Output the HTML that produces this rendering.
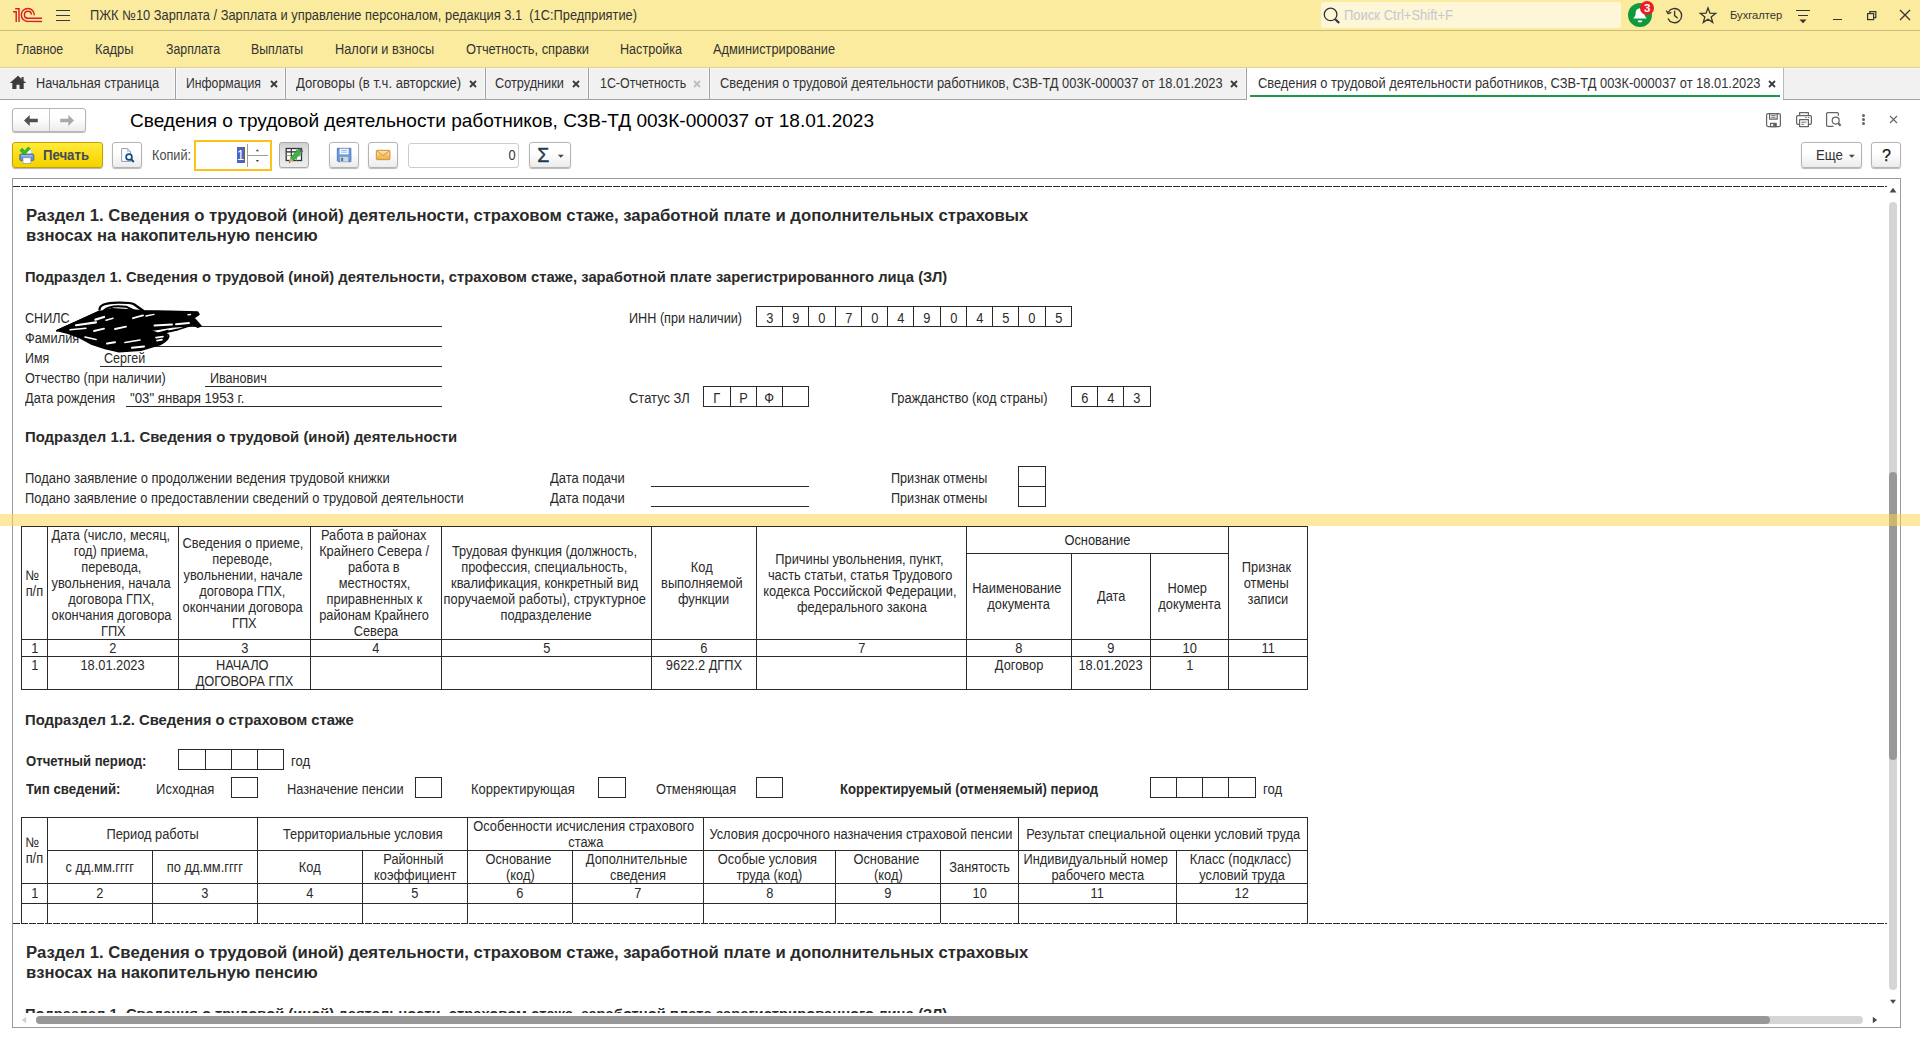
<!DOCTYPE html>
<html lang="ru"><head><meta charset="utf-8"><title>Сведения о трудовой деятельности работников, СЗВ-ТД</title>
<style>
html,body{margin:0;padding:0}
body{width:1920px;height:1040px;position:relative;overflow:hidden;background:#fff;font-family:'Liberation Sans', sans-serif;}
body div, body span, body svg{position:absolute;box-sizing:border-box}
span{white-space:pre;display:block}
.btn{border:1px solid #b4b4b4;border-radius:3px;background:linear-gradient(#ffffff 40%,#ececec);box-shadow:0 1px 1px rgba(0,0,0,.28)}
.clip{overflow:hidden}
.clip div,.clip span,.clip svg{position:absolute}
</style></head>
<body>
<div style="left:0px;top:0px;width:1920px;height:30px;background:#fbeb9e"></div>
<div style="left:0px;top:30px;width:1920px;height:1px;background:#cdbd76"></div>
<div style="left:0px;top:31px;width:1920px;height:36px;background:#fbeb9e"></div>
<div style="left:0px;top:67px;width:1920px;height:1px;background:#e0d292"></div>
<div style="left:0px;top:68px;width:1920px;height:31px;background:#f1f1f1"></div>
<div style="left:0px;top:68px;width:1920px;height:1px;background:#f8f8f8"></div>
<div style="left:0px;top:99px;width:1920px;height:1px;background:#a2a2a2"></div>
<svg style="left:10px;top:5px" width="36" height="22" viewBox="10 5 36 22" fill="none" stroke="#d9202a" stroke-width="1.45" stroke-linecap="butt" stroke-linejoin="miter">
<path d="M13 11.7H16.2V22"/><path d="M15.2 8.7H19V22"/>
<path d="M34.3 15.2A6.5 6.5 0 1 0 27.9 21.4H42"/>
<path d="M31.4 14.6A3.5 3.5 0 1 0 27.9 18.3H42"/>
</svg>
<div style="left:56px;top:10px;width:14px;height:1.4px;background:#343a45"></div>
<div style="left:56px;top:15px;width:14px;height:1.4px;background:#343a45"></div>
<div style="left:56px;top:20px;width:14px;height:1.4px;background:#343a45"></div>
<span style="left:90.00px;top:7px;font-size:13.8px;line-height:17px;color:#333;transform:scaleX(0.9309);transform-origin:left top;">ПЖК №10 Зарплата / Зарплата и управление персоналом, редакция 3.1  (1С:Предприятие)</span>
<div style="left:1321px;top:2px;width:300px;height:26px;background:#fdf6d7;border-radius:3px"></div>
<svg style="left:1322px;top:5px" width="20" height="20" viewBox="0 0 20 20" fill="none" stroke="#333" stroke-width="1.3"><circle cx="8.6" cy="9.4" r="6.3"/><path d="M13.2 14.2L17.2 18" stroke-width="2.2"/></svg>
<span style="left:1343.50px;top:7px;font-size:13.8px;line-height:17px;color:#c6c6cf;transform:scaleX(0.9423);transform-origin:left top;">Поиск Ctrl+Shift+F</span>
<svg style="left:1626px;top:0px" width="32" height="30" viewBox="1626 0 32 30">
<circle cx="1640" cy="15" r="12" fill="#0f9a3f"/>
<path d="M1640 8.2c-2.9 0-4.3 2.2-4.3 4.6 0 3-1.3 4.6-2.6 5.6h13.8c-1.3-1-2.6-2.600-2.6-5.600 0-2.400-1.400-4.600-4.300-4.600z" fill="#fff"/>
<path d="M1637.600 20.500h4.800a2.400 1.900 0 0 1-4.800 0z" fill="#fff"/>
<circle cx="1647" cy="8" r="7" fill="#ee1c25"/>
</svg>
<span style="left:1643.90px;top:1px;font-size:11.5px;line-height:14px;color:#fff;font-weight:700;">3</span>
<svg style="left:1664px;top:5px" width="22" height="22" viewBox="1664 5 22 22" fill="none" stroke="#333" stroke-width="1.3">
<path d="M1668.300 12.200A7.100 7.100 0 1 1 1668 18.400"/><path d="M1666.300 10.600L1668.200 13.700 1671.300 12.300" fill="none"/>
<path d="M1674.600 10.800V15.600L1677.700 18.200"/></svg>
<svg style="left:1698px;top:5px" width="22" height="22" viewBox="1698 5 22 22" fill="none" stroke="#333" stroke-width="1.3" stroke-linejoin="miter">
<path d="M1708.00 7.90L1709.94 13.23 1715.61 13.43 1711.14 16.92 1712.70 22.37 1708.00 19.20 1703.30 22.37 1704.86 16.92 1700.39 13.43 1706.06 13.23Z"/></svg>
<span style="left:1729.70px;top:8px;font-size:11.5px;line-height:14px;color:#333;transform:scaleX(0.9725);transform-origin:left top;">Бухгалтер</span>
<div style="left:1796px;top:10px;width:14px;height:1.3px;background:#333"></div>
<div style="left:1798px;top:15px;width:10px;height:1.3px;background:#333"></div>
<svg style="left:1799px;top:19px" width="8" height="5" viewBox="0 0 8 5"><path d="M0.5 0.500h7L4 4.300z" fill="#333"/></svg>
<div style="left:1833px;top:19px;width:9px;height:1.3px;background:#333"></div>
<svg style="left:1865px;top:9px" width="14" height="13" viewBox="1865 9 14 13" fill="none" stroke="#333" stroke-width="1.2">
<rect x="1867.600" y="13.600" width="6" height="6"/><path d="M1869.800 13.600V11.600H1875.800V17.600H1873.600"/></svg>
<svg style="left:1898px;top:8px" width="14" height="14" viewBox="1898 8 14 14" fill="none" stroke="#333" stroke-width="1.3"><path d="M1900 10L1910 20M1910 10L1900 20"/></svg>
<span style="left:16.30px;top:41px;font-size:13.8px;line-height:17px;color:#333;transform:scaleX(0.8953);transform-origin:left top;">Главное</span>
<span style="left:95.00px;top:41px;font-size:13.8px;line-height:17px;color:#333;transform:scaleX(0.9309);transform-origin:left top;">Кадры</span>
<span style="left:165.50px;top:41px;font-size:13.8px;line-height:17px;color:#333;transform:scaleX(0.8937);transform-origin:left top;">Зарплата</span>
<span style="left:251.30px;top:41px;font-size:13.8px;line-height:17px;color:#333;transform:scaleX(0.8927);transform-origin:left top;">Выплаты</span>
<span style="left:335.30px;top:41px;font-size:13.8px;line-height:17px;color:#333;transform:scaleX(0.9249);transform-origin:left top;">Налоги и взносы</span>
<span style="left:466.00px;top:41px;font-size:13.8px;line-height:17px;color:#333;transform:scaleX(0.9323);transform-origin:left top;">Отчетность, справки</span>
<span style="left:620.00px;top:41px;font-size:13.8px;line-height:17px;color:#333;transform:scaleX(0.9128);transform-origin:left top;">Настройка</span>
<span style="left:713.00px;top:41px;font-size:13.8px;line-height:17px;color:#333;transform:scaleX(0.9273);transform-origin:left top;">Администрирование</span>
<div style="left:174px;top:69px;width:3px;height:30px;background:#f8f8f8"></div>
<div style="left:175px;top:68px;width:1px;height:31px;background:#a0a0a0"></div>
<div style="left:284px;top:69px;width:3px;height:30px;background:#f8f8f8"></div>
<div style="left:285px;top:68px;width:1px;height:31px;background:#a0a0a0"></div>
<div style="left:484px;top:69px;width:3px;height:30px;background:#f8f8f8"></div>
<div style="left:485px;top:68px;width:1px;height:31px;background:#a0a0a0"></div>
<div style="left:587px;top:69px;width:3px;height:30px;background:#f8f8f8"></div>
<div style="left:588px;top:68px;width:1px;height:31px;background:#a0a0a0"></div>
<div style="left:708px;top:69px;width:3px;height:30px;background:#f8f8f8"></div>
<div style="left:709px;top:68px;width:1px;height:31px;background:#a0a0a0"></div>
<div style="left:1245px;top:69px;width:3px;height:30px;background:#f8f8f8"></div>
<div style="left:1246px;top:68px;width:1px;height:31px;background:#a0a0a0"></div>
<div style="left:1247px;top:68px;width:536px;height:32px;background:#fff"></div>
<div style="left:1783px;top:68px;width:1px;height:31px;background:#b8b8b8"></div>
<div style="left:1250px;top:95px;width:530px;height:2px;background:#1a9a45"></div>
<svg style="left:9px;top:75px" width="18" height="15" viewBox="0 0 18 15"><path d="M9 0.800L0.800 8h2.500v6h4.200v-4.300h3v4.300h4.200V8h2.500L14.600 5.700V2h-2v2z" fill="#3c3c3c"/></svg>
<span style="left:36.00px;top:75px;font-size:13.8px;line-height:17px;color:#333;transform:scaleX(0.9213);transform-origin:left top;">Начальная страница</span>
<span style="left:186.30px;top:75px;font-size:13.8px;line-height:17px;color:#333;transform:scaleX(0.8866);transform-origin:left top;">Информация</span>
<svg style="left:268.7px;top:78.500px" width="10" height="10" viewBox="0 0 10 10" fill="none" stroke="#3a3a3a" stroke-width="1.800"><path d="M2 2L8 8M8 2L2 8"/></svg>
<span style="left:296.00px;top:75px;font-size:13.8px;line-height:17px;color:#333;transform:scaleX(0.9483);transform-origin:left top;">Договоры (в т.ч. авторские)</span>
<svg style="left:467.9px;top:78.500px" width="10" height="10" viewBox="0 0 10 10" fill="none" stroke="#3a3a3a" stroke-width="1.800"><path d="M2 2L8 8M8 2L2 8"/></svg>
<span style="left:495.30px;top:75px;font-size:13.8px;line-height:17px;color:#333;transform:scaleX(0.9219);transform-origin:left top;">Сотрудники</span>
<svg style="left:571.4px;top:78.500px" width="10" height="10" viewBox="0 0 10 10" fill="none" stroke="#3a3a3a" stroke-width="1.800"><path d="M2 2L8 8M8 2L2 8"/></svg>
<span style="left:599.60px;top:75px;font-size:13.8px;line-height:17px;color:#333;transform:scaleX(0.8997);transform-origin:left top;">1С-Отчетность</span>
<svg style="left:692.4px;top:78.500px" width="10" height="10" viewBox="0 0 10 10" fill="none" stroke="#bdbdbd" stroke-width="1.800"><path d="M2 2L8 8M8 2L2 8"/></svg>
<span style="left:720.40px;top:75px;font-size:13.8px;line-height:17px;color:#333;transform:scaleX(0.9326);transform-origin:left top;">Сведения о трудовой деятельности работников, СЗВ-ТД 003К-000037 от 18.01.2023</span>
<svg style="left:1229.4px;top:78.500px" width="10" height="10" viewBox="0 0 10 10" fill="none" stroke="#3a3a3a" stroke-width="1.800"><path d="M2 2L8 8M8 2L2 8"/></svg>
<span style="left:1257.50px;top:75px;font-size:13.8px;line-height:17px;color:#333;transform:scaleX(0.9324);transform-origin:left top;">Сведения о трудовой деятельности работников, СЗВ-ТД 003К-000037 от 18.01.2023</span>
<svg style="left:1766.9px;top:78.500px" width="10" height="10" viewBox="0 0 10 10" fill="none" stroke="#3a3a3a" stroke-width="1.800"><path d="M2 2L8 8M8 2L2 8"/></svg>
<div class="btn" style="left:12px;top:108px;width:74px;height:24px;"></div>
<div style="left:49px;top:109px;width:1px;height:22px;background:#c4c4c4"></div>
<svg style="left:23px;top:114px" width="16" height="13" viewBox="0 0 16 13"><path d="M1 6.500L6.700 1v3.800H14.800v3.400H6.700V12z" fill="#505050"/></svg>
<svg style="left:59px;top:114px" width="16" height="13" viewBox="0 0 16 13"><path d="M15 6.500L9.300 1v3.800H1.200v3.400H9.300V12z" fill="#a9a9a9"/></svg>
<span style="left:130.00px;top:109px;font-size:19px;line-height:23px;color:#000;transform:scaleX(1.0025);transform-origin:left top;">Сведения о трудовой деятельности работников, СЗВ-ТД 003К-000037 от 18.01.2023</span>
<svg style="left:1764px;top:110px" width="20" height="20" viewBox="1764 110 20 20" fill="none" stroke="#636363" stroke-width="1.200" stroke-linejoin="round">
<rect x="1766.600" y="113.600" width="13.800" height="13" rx="1.500"/><rect x="1769.600" y="113.600" width="7.600" height="5.600"/>
<path d="M1771.200 115.600h4.400M1771.200 117.300h4.400" stroke-width="0.900"/>
<rect x="1770.600" y="123.300" width="5.600" height="3.300"/><rect x="1773.200" y="123.600" width="3" height="3" fill="#636363" stroke="none"/></svg>
<svg style="left:1794px;top:110px" width="20" height="20" viewBox="1794 110 20 20" fill="none" stroke="#636363" stroke-width="1.200" stroke-linejoin="round">
<path d="M1799.600 115.600V112.600H1808.400V115.600"/><path d="M1799.600 124.300H1797.900A1.300 1.300 0 0 1 1796.600 123V116.900A1.300 1.300 0 0 1 1797.900 115.600H1810.100A1.300 1.300 0 0 1 1811.400 116.900V123A1.300 1.300 0 0 1 1810.100 124.300H1808.400"/>
<rect x="1799.600" y="119.600" width="8.800" height="7"/><path d="M1801.300 122.200h5M1801.300 124.300h2.800M1805.200 117.600h1.600M1808 117.600h1.400" stroke-width="0.900"/></svg>
<svg style="left:1824px;top:110px" width="20" height="20" viewBox="1824 110 20 20" fill="none" stroke="#636363" stroke-width="1.200" stroke-linejoin="round">
<path d="M1833.500 126.400H1827.800A1.200 1.200 0 0 1 1826.600 125.200V113.800A1.200 1.200 0 0 1 1827.800 112.600H1837.200A1.200 1.200 0 0 1 1838.400 113.800V115.800"/>
<circle cx="1835.700" cy="120.600" r="3.500" fill="#fff"/><path d="M1838.300 123.300L1840.600 125.800" stroke-width="2"/></svg>
<div style="left:1861.800px;top:113.9px;width:3px;height:3px;border-radius:50%;background:#636363"></div>
<div style="left:1861.800px;top:118.1px;width:3px;height:3px;border-radius:50%;background:#636363"></div>
<div style="left:1861.800px;top:122.2px;width:3px;height:3px;border-radius:50%;background:#636363"></div>
<svg style="left:1888px;top:114px" width="11" height="11" viewBox="1888 114 11 11" fill="none" stroke="#636363" stroke-width="1.100"><path d="M1890 116L1897 123M1897 116L1890 123"/></svg>
<div style="left:12px;top:142px;width:91px;height:26px;border:1px solid #c4a100;border-radius:3px;background:linear-gradient(#ffea3d 0%,#fbdd12 55%,#f1d300 100%);box-shadow:0 1px 1px rgba(0,0,0,.30)"></div>
<svg style="left:18px;top:146px" width="18" height="19" viewBox="18 145 18 19">
<rect x="22.500" y="149" width="9" height="5" fill="#fff" stroke="#b9c3d3" stroke-width="0.600"/>
<rect x="19.800" y="153" width="14" height="6.600" rx="1.300" fill="#6b8fc4" stroke="#42659a" stroke-width="0.900"/>
<rect x="21" y="154.200" width="11.600" height="1.300" fill="#a9c3e6"/>
<rect x="23" y="156.800" width="7.800" height="5.600" fill="#fff" stroke="#8c99ad" stroke-width="0.700"/>
<path d="M19.800 149.400L22.200 147.200 24.600 150 28.400 146 30.200 147.800 24.600 153.800z" fill="#2fbe22" stroke="#1c8d15" stroke-width="0.600"/>
</svg>
<span style="left:42.70px;top:147px;font-size:13.8px;line-height:17px;color:#434a5b;font-weight:700;transform:scaleX(0.9549);transform-origin:left top;">Печать</span>
<div class="btn" style="left:112px;top:142px;width:30px;height:26px;"></div>
<svg style="left:118px;top:146px" width="18" height="18" viewBox="118 146 18 18" fill="none">
<path d="M121.600 148.600H127.600L130.600 151.600V161.400H121.600Z" fill="#fff" stroke="#7f93ad" stroke-width="0.900"/><path d="M127.600 148.600V151.600H130.600" stroke="#9fb0c6" stroke-width="0.800"/>
<circle cx="129" cy="157" r="2.900" fill="#fff" stroke="#0e4f86" stroke-width="1.700"/><path d="M131.200 159.300L133.800 162" stroke="#0e4f86" stroke-width="2"/></svg>
<span style="left:152.20px;top:147px;font-size:13.8px;line-height:17px;color:#4a4a4a;transform:scaleX(0.9190);transform-origin:left top;">Копий:</span>
<div style="left:194px;top:140px;width:78px;height:31px;border:2px solid #fbc318;background:#fff"></div>
<div style="left:237px;top:147px;width:7px;height:16px;background:#4963c9"></div>
<span style="left:237.20px;top:147px;font-size:13.8px;line-height:17px;color:#fff;transform:scaleX(0.9300);transform-origin:left top;">1</span>
<div style="left:244px;top:147px;width:1px;height:16px;background:#7a6a2a"></div>
<div style="left:247px;top:144px;width:1px;height:23px;background:#9c9c9c"></div>
<div style="left:248px;top:155px;width:20px;height:1px;background:#9c9c9c"></div>
<svg style="left:254px;top:148px" width="7" height="4" viewBox="0 0 7 4"><path d="M1.700 3.300L3.400 1.200 5.100 3.300z" fill="#444"/></svg>
<svg style="left:254px;top:159px" width="7" height="4" viewBox="0 0 7 4"><path d="M1.700 0.900L3.400 3 5.100 0.900z" fill="#444"/></svg>
<div style="left:279px;top:142px;width:30px;height:26px;border:1px solid #a9a9a9;border-radius:3px;background:linear-gradient(#cfcfcf 0%,#e2e2e2 35%,#ededed 100%);box-shadow:0 1px 0 rgba(0,0,0,.12)"></div>
<svg style="left:284px;top:146px" width="20" height="19" viewBox="284 146 20 19" fill="none">
<rect x="286.200" y="148.500" width="15.300" height="12" fill="#fff" stroke="#333" stroke-width="1.300"/>
<path d="M286.200 152.200H301.500M286.200 155.600H301.500" stroke="#8a8a8a" stroke-width="0.900"/><path d="M291.300 148.500V160.500M296.400 148.500V160.500" stroke="#8a8a8a" stroke-width="0.900"/>
<path d="M286.200 151.800H301.500" stroke="#333" stroke-width="1.100"/><path d="M291.300 148.500V156" stroke="#333" stroke-width="1"/>
<path d="M298.300 149.300L302 152.600 293.400 160.800 290 158z" fill="#3db24b" stroke="#2a8a37" stroke-width="0.600"/>
<path d="M298.300 149.300L299.900 147.800 303.200 150.900 302 152.600z" fill="#56606c"/>
<path d="M290 158L293.400 160.800 288.800 163z" fill="#d9a860"/><path d="M289.500 161.800L288.800 163 290.400 162.500z" fill="#333"/>
</svg>
<div class="btn" style="left:329px;top:142px;width:30px;height:26px;"></div>
<svg style="left:336px;top:147px" width="16" height="16" viewBox="336 147 16 16" fill="none">
<path d="M337.300 148.300H350.900V161.700H338.300L337.300 160.700Z" fill="#6a98d8" stroke="#3f6fb3" stroke-width="0.800"/>
<rect x="339.600" y="148.700" width="9" height="5.600" fill="#fff"/><path d="M340.900 150.400h6.400M340.900 152.200h6.400" stroke="#7aa2dc" stroke-width="0.800"/>
<rect x="340" y="156.800" width="8.300" height="4.900" fill="#cfd8d2"/><rect x="341.200" y="157.800" width="1.900" height="3.300" fill="#3f6fb3"/>
</svg>
<div class="btn" style="left:368px;top:142px;width:30px;height:26px;"></div>
<svg style="left:375px;top:149px" width="16" height="12" viewBox="375 149 16 12" fill="none">
<defs><linearGradient id="mg" x1="0" y1="0" x2="0" y2="1"><stop offset="0" stop-color="#fbe3ad"/><stop offset="1" stop-color="#eeb04c"/></linearGradient></defs>
<rect x="376.300" y="150.300" width="13.600" height="9.400" rx="1" fill="url(#mg)" stroke="#d18f26" stroke-width="1"/>
<path d="M376.800 150.800L383.100 155.800 389.400 150.800" stroke="#d18f26" stroke-width="0.900"/><path d="M376.800 159.200L381.300 154.600M389.400 159.200L384.900 154.600" stroke="#dda345" stroke-width="0.700"/></svg>
<div style="left:408px;top:143px;width:111px;height:25px;border:1px solid #cdcdcd;border-radius:3px;background:#fff"></div>
<span style="left:507.81px;top:147px;font-size:13.8px;line-height:17px;color:#333;transform:scaleX(0.9300);transform-origin:right top;">0</span>
<div class="btn" style="left:529px;top:142px;width:42px;height:26px;"></div>
<span style="left:537.30px;top:143px;font-size:19.5px;line-height:24px;color:#1f3a50;-webkit-text-stroke:0.45px #1f3a50;">Σ</span>
<svg style="left:557px;top:154px" width="8" height="5" viewBox="0 0 8 5"><path d="M0.800 0.800h6L3.800 3.800z" fill="#444"/></svg>
<div class="btn" style="left:1801px;top:142px;width:61px;height:26px;"></div>
<span style="left:1815.50px;top:147px;font-size:13.8px;line-height:17px;color:#333;transform:scaleX(0.9616);transform-origin:left top;">Еще</span>
<svg style="left:1848px;top:154px" width="8" height="5" viewBox="0 0 8 5"><path d="M0.800 0.800h6L3.800 3.800z" fill="#444"/></svg>
<div class="btn" style="left:1871px;top:142px;width:30px;height:26px;"></div>
<span style="left:1881.95px;top:146px;font-size:16px;line-height:19px;color:#111;-webkit-text-stroke:0.25px #111;">?</span>
<div style="left:12px;top:178px;width:1889px;height:850px;border:1px solid #9b9b9b;background:#fff"></div>
<svg style="left:1889px;top:187px" width="8" height="6" viewBox="0 0 8 6"><path d="M0.600 5.400L4 0.800 7.400 5.400z" fill="#4a4a4a"/></svg>
<div style="left:1889px;top:202px;width:8px;height:788px;background:#d5d5d5;border-radius:4px"></div>
<div style="left:1889px;top:472px;width:8px;height:288px;background:#989898;border-radius:4px"></div>
<svg style="left:1889px;top:999px" width="8" height="6" viewBox="0 0 8 6"><path d="M1 0.800L4 4.800 7 0.800z" fill="#4a4a4a"/></svg>
<svg style="left:21px;top:1016px" width="6" height="8" viewBox="0 0 6 8"><path d="M5.200 0.800L0.800 4 5.200 7.200z" fill="#cfcfcf"/></svg>
<div style="left:36px;top:1016px;width:1827px;height:8px;background:#d5d5d5;border-radius:4px"></div>
<div style="left:36px;top:1016px;width:1734px;height:8px;background:#989898;border-radius:4px"></div>
<svg style="left:1872px;top:1016px" width="6" height="8" viewBox="0 0 6 8"><path d="M0.800 0.800L5.200 4 0.800 7.200z" fill="#4a4a4a"/></svg>
<div class="clip" style="left:0;top:0;width:1888px;height:1013px">
<div style="left:13px;top:186px;width:1874px;height:1px;background:repeating-linear-gradient(90deg,#2a2a2a 0,#2a2a2a 7px,transparent 7px,transparent 8px)"></div>
<span style="left:25.80px;top:206px;font-size:16px;line-height:19px;color:#2a2a2a;font-weight:700;transform:scaleX(1.0426);transform-origin:left top;">Раздел 1. Сведения о трудовой (иной) деятельности, страховом стаже, заработной плате и дополнительных страховых</span>
<span style="left:25.80px;top:226px;font-size:16px;line-height:19px;color:#2a2a2a;font-weight:700;transform:scaleX(1.0380);transform-origin:left top;">взносах на накопительную пенсию</span>
<span style="left:24.80px;top:267px;font-size:15.3px;line-height:19px;color:#2a2a2a;font-weight:700;transform:scaleX(0.9643);transform-origin:left top;">Подраздел 1. Сведения о трудовой (иной) деятельности, страховом стаже, заработной плате зарегистрированного лица (ЗЛ)</span>
<span style="left:25.30px;top:310px;font-size:13.8px;line-height:17px;color:#2a2a2a;transform:scaleX(0.9146);transform-origin:left top;">СНИЛС</span>
<span style="left:25.30px;top:330px;font-size:13.8px;line-height:17px;color:#2a2a2a;transform:scaleX(0.9250);transform-origin:left top;">Фамилия</span>
<span style="left:25.30px;top:350px;font-size:13.8px;line-height:17px;color:#2a2a2a;transform:scaleX(0.9005);transform-origin:left top;">Имя</span>
<span style="left:25.30px;top:370px;font-size:13.8px;line-height:17px;color:#2a2a2a;transform:scaleX(0.9175);transform-origin:left top;">Отчество (при наличии)</span>
<span style="left:25.30px;top:390px;font-size:13.8px;line-height:17px;color:#2a2a2a;transform:scaleX(0.9268);transform-origin:left top;">Дата рождения</span>
<div style="left:76px;top:326px;width:366px;height:1px;background:#2a2a2a"></div>
<div style="left:100px;top:346px;width:342px;height:1px;background:#2a2a2a"></div>
<div style="left:100px;top:366px;width:342px;height:1px;background:#2a2a2a"></div>
<div style="left:205px;top:386px;width:237px;height:1px;background:#2a2a2a"></div>
<div style="left:126px;top:406px;width:316px;height:1px;background:#2a2a2a"></div>
<span style="left:104.30px;top:350px;font-size:13.8px;line-height:17px;color:#2a2a2a;transform:scaleX(0.9071);transform-origin:left top;">Сергей</span>
<span style="left:209.60px;top:370px;font-size:13.8px;line-height:17px;color:#2a2a2a;transform:scaleX(0.9134);transform-origin:left top;">Иванович</span>
<span style="left:130.00px;top:390px;font-size:13.8px;line-height:17px;color:#2a2a2a;transform:scaleX(0.9585);transform-origin:left top;">"03" января 1953 г.</span>
<svg style="left:50px;top:298px" width="160" height="58" viewBox="50 298 160 58" fill="none" stroke="#000" stroke-linecap="round" stroke-linejoin="round">
<path d="M57 330.500L75 322.500 99 311.800 112 308.800 143 310.800 170 311.300 197.500 312 199 314.500 194 318 201 326 197.500 327.200 191 323.800 186 326 172 327 158 329.200 150 330.500 158 333.200 168 330.500 166 333.500 167.500 338 160 344.500 141 350.300 119 351.800 105 348.500 92 344.300 80 337.800 68 333.300Z" fill="#000" stroke-width="1.500"/>
<path d="M99.500 309.500C99.500 304.500 108 302.800 118 302.700S131 302.700 134 304.200L143.500 311" stroke-width="2.300"/>
<path d="M104 310.500C108 306.300 118 305.700 126 306.700L137 312" stroke-width="2"/>
<path d="M57 330.800L99 311.500M166 334.500C171 334 169 340 160 344.500M157 334L178 329.500 193 324.600" stroke-width="1.800"/>
<g stroke="#fff">
<path d="M76 325.200L96 322.400" stroke-width="2.100"/><path d="M95.500 319.600L104 317" stroke-width="2.300"/>
<path d="M106 320.200L113 318.300M146 316L154 314.400M70 329.700L86 328.200M188 314.700L190.500 314.500" stroke-width="1.400"/>
<path d="M133 318.200L143 315.400M94 331L104 328.600M115 329L126 326.600" stroke-width="1.900"/>
<path d="M154.500 325.500L172 324.500M176 324.200L189 323" stroke-width="1.900"/>
<path d="M85 337L96 339.500M125 342.500L140 340M156 337.600L163 336.600M157 340.600L162 339.600" stroke-width="1.600"/>
<path d="M107 343.600L115 342.200M132 347.800L144 346.600" stroke-width="2"/>
</g></svg>
<span style="left:629.30px;top:310px;font-size:13.8px;line-height:17px;color:#2a2a2a;transform:scaleX(0.9172);transform-origin:left top;">ИНН (при наличии)</span>
<div style="left:756px;top:306px;width:316px;height:1px;background:#2a2a2a"></div>
<div style="left:756px;top:326px;width:316px;height:1px;background:#2a2a2a"></div>
<div style="left:756px;top:306px;width:1px;height:21px;background:#2a2a2a"></div>
<div style="left:782px;top:306px;width:1px;height:21px;background:#2a2a2a"></div>
<div style="left:808px;top:306px;width:1px;height:21px;background:#2a2a2a"></div>
<div style="left:835px;top:306px;width:1px;height:21px;background:#2a2a2a"></div>
<div style="left:861px;top:306px;width:1px;height:21px;background:#2a2a2a"></div>
<div style="left:887px;top:306px;width:1px;height:21px;background:#2a2a2a"></div>
<div style="left:913px;top:306px;width:1px;height:21px;background:#2a2a2a"></div>
<div style="left:940px;top:306px;width:1px;height:21px;background:#2a2a2a"></div>
<div style="left:966px;top:306px;width:1px;height:21px;background:#2a2a2a"></div>
<div style="left:992px;top:306px;width:1px;height:21px;background:#2a2a2a"></div>
<div style="left:1018px;top:306px;width:1px;height:21px;background:#2a2a2a"></div>
<div style="left:1045px;top:306px;width:1px;height:21px;background:#2a2a2a"></div>
<div style="left:1071px;top:306px;width:1px;height:21px;background:#2a2a2a"></div>
<span style="left:765.66px;top:310px;font-size:13.8px;line-height:17px;color:#2a2a2a;transform:scaleX(0.9300);transform-origin:center top;">3</span>
<span style="left:791.66px;top:310px;font-size:13.8px;line-height:17px;color:#2a2a2a;transform:scaleX(0.9300);transform-origin:center top;">9</span>
<span style="left:818.16px;top:310px;font-size:13.8px;line-height:17px;color:#2a2a2a;transform:scaleX(0.9300);transform-origin:center top;">0</span>
<span style="left:844.66px;top:310px;font-size:13.8px;line-height:17px;color:#2a2a2a;transform:scaleX(0.9300);transform-origin:center top;">7</span>
<span style="left:870.66px;top:310px;font-size:13.8px;line-height:17px;color:#2a2a2a;transform:scaleX(0.9300);transform-origin:center top;">0</span>
<span style="left:896.66px;top:310px;font-size:13.8px;line-height:17px;color:#2a2a2a;transform:scaleX(0.9300);transform-origin:center top;">4</span>
<span style="left:923.16px;top:310px;font-size:13.8px;line-height:17px;color:#2a2a2a;transform:scaleX(0.9300);transform-origin:center top;">9</span>
<span style="left:949.66px;top:310px;font-size:13.8px;line-height:17px;color:#2a2a2a;transform:scaleX(0.9300);transform-origin:center top;">0</span>
<span style="left:975.66px;top:310px;font-size:13.8px;line-height:17px;color:#2a2a2a;transform:scaleX(0.9300);transform-origin:center top;">4</span>
<span style="left:1001.66px;top:310px;font-size:13.8px;line-height:17px;color:#2a2a2a;transform:scaleX(0.9300);transform-origin:center top;">5</span>
<span style="left:1028.16px;top:310px;font-size:13.8px;line-height:17px;color:#2a2a2a;transform:scaleX(0.9300);transform-origin:center top;">0</span>
<span style="left:1054.66px;top:310px;font-size:13.8px;line-height:17px;color:#2a2a2a;transform:scaleX(0.9300);transform-origin:center top;">5</span>
<span style="left:629.30px;top:390px;font-size:13.8px;line-height:17px;color:#2a2a2a;transform:scaleX(0.9384);transform-origin:left top;">Статус ЗЛ</span>
<div style="left:703px;top:386px;width:106px;height:1px;background:#2a2a2a"></div>
<div style="left:703px;top:406px;width:106px;height:1px;background:#2a2a2a"></div>
<div style="left:703px;top:386px;width:1px;height:21px;background:#2a2a2a"></div>
<div style="left:730px;top:386px;width:1px;height:21px;background:#2a2a2a"></div>
<div style="left:756px;top:386px;width:1px;height:21px;background:#2a2a2a"></div>
<div style="left:782px;top:386px;width:1px;height:21px;background:#2a2a2a"></div>
<div style="left:808px;top:386px;width:1px;height:21px;background:#2a2a2a"></div>
<span style="left:713.26px;top:390px;font-size:13.8px;line-height:17px;color:#2a2a2a;transform:scaleX(0.9300);transform-origin:center top;">Г</span>
<span style="left:738.90px;top:390px;font-size:13.8px;line-height:17px;color:#2a2a2a;transform:scaleX(0.9300);transform-origin:center top;">Р</span>
<span style="left:764.25px;top:390px;font-size:13.8px;line-height:17px;color:#2a2a2a;transform:scaleX(0.9300);transform-origin:center top;">Ф</span>
<span style="left:890.80px;top:390px;font-size:13.8px;line-height:17px;color:#2a2a2a;transform:scaleX(0.9357);transform-origin:left top;">Гражданство (код страны)</span>
<div style="left:1071px;top:386px;width:80px;height:1px;background:#2a2a2a"></div>
<div style="left:1071px;top:406px;width:80px;height:1px;background:#2a2a2a"></div>
<div style="left:1071px;top:386px;width:1px;height:21px;background:#2a2a2a"></div>
<div style="left:1097px;top:386px;width:1px;height:21px;background:#2a2a2a"></div>
<div style="left:1123px;top:386px;width:1px;height:21px;background:#2a2a2a"></div>
<div style="left:1150px;top:386px;width:1px;height:21px;background:#2a2a2a"></div>
<span style="left:1080.66px;top:390px;font-size:13.8px;line-height:17px;color:#2a2a2a;transform:scaleX(0.9300);transform-origin:center top;">6</span>
<span style="left:1106.66px;top:390px;font-size:13.8px;line-height:17px;color:#2a2a2a;transform:scaleX(0.9300);transform-origin:center top;">4</span>
<span style="left:1133.16px;top:390px;font-size:13.8px;line-height:17px;color:#2a2a2a;transform:scaleX(0.9300);transform-origin:center top;">3</span>
<span style="left:24.80px;top:427px;font-size:15.3px;line-height:19px;color:#2a2a2a;font-weight:700;transform:scaleX(0.9740);transform-origin:left top;">Подраздел 1.1. Сведения о трудовой (иной) деятельности</span>
<span style="left:25.30px;top:470px;font-size:13.8px;line-height:17px;color:#2a2a2a;transform:scaleX(0.9398);transform-origin:left top;">Подано заявление о продолжении ведения трудовой книжки</span>
<span style="left:25.30px;top:490px;font-size:13.8px;line-height:17px;color:#2a2a2a;transform:scaleX(0.9350);transform-origin:left top;">Подано заявление о предоставлении сведений о трудовой деятельности</span>
<span style="left:549.70px;top:470px;font-size:13.8px;line-height:17px;color:#2a2a2a;transform:scaleX(0.9403);transform-origin:left top;">Дата подачи</span>
<span style="left:891.30px;top:470px;font-size:13.8px;line-height:17px;color:#2a2a2a;transform:scaleX(0.9147);transform-origin:left top;">Признак отмены</span>
<span style="left:549.70px;top:490px;font-size:13.8px;line-height:17px;color:#2a2a2a;transform:scaleX(0.9403);transform-origin:left top;">Дата подачи</span>
<span style="left:891.30px;top:490px;font-size:13.8px;line-height:17px;color:#2a2a2a;transform:scaleX(0.9147);transform-origin:left top;">Признак отмены</span>
<div style="left:651px;top:486px;width:158px;height:1px;background:#2a2a2a"></div>
<div style="left:651px;top:506px;width:158px;height:1px;background:#2a2a2a"></div>
<div style="left:1018px;top:466px;width:28px;height:1px;background:#2a2a2a"></div>
<div style="left:1018px;top:486px;width:28px;height:1px;background:#2a2a2a"></div>
<div style="left:1018px;top:506px;width:28px;height:1px;background:#2a2a2a"></div>
<div style="left:1018px;top:466px;width:1px;height:41px;background:#2a2a2a"></div>
<div style="left:1045px;top:466px;width:1px;height:41px;background:#2a2a2a"></div>
<div style="left:21px;top:526px;width:1287px;height:1px;background:#2a2a2a"></div>
<div style="left:21px;top:639px;width:1287px;height:1px;background:#2a2a2a"></div>
<div style="left:21px;top:656px;width:1287px;height:1px;background:#2a2a2a"></div>
<div style="left:21px;top:689px;width:1287px;height:1px;background:#2a2a2a"></div>
<div style="left:966px;top:553px;width:263px;height:1px;background:#2a2a2a"></div>
<div style="left:21px;top:526px;width:1px;height:164px;background:#2a2a2a"></div>
<div style="left:47px;top:526px;width:1px;height:164px;background:#2a2a2a"></div>
<div style="left:178px;top:526px;width:1px;height:164px;background:#2a2a2a"></div>
<div style="left:310px;top:526px;width:1px;height:164px;background:#2a2a2a"></div>
<div style="left:441px;top:526px;width:1px;height:164px;background:#2a2a2a"></div>
<div style="left:651px;top:526px;width:1px;height:164px;background:#2a2a2a"></div>
<div style="left:756px;top:526px;width:1px;height:164px;background:#2a2a2a"></div>
<div style="left:966px;top:526px;width:1px;height:164px;background:#2a2a2a"></div>
<div style="left:1071px;top:553px;width:1px;height:137px;background:#2a2a2a"></div>
<div style="left:1150px;top:553px;width:1px;height:137px;background:#2a2a2a"></div>
<div style="left:1228px;top:526px;width:1px;height:164px;background:#2a2a2a"></div>
<div style="left:1307px;top:526px;width:1px;height:164px;background:#2a2a2a"></div>
<span style="left:25.29px;top:567px;font-size:13.8px;line-height:17px;color:#2a2a2a;transform:scaleX(0.9300);transform-origin:center top;">№</span>
<span style="left:25.11px;top:583px;font-size:13.8px;line-height:17px;color:#2a2a2a;transform:scaleX(0.9300);transform-origin:center top;">п/п</span>
<span style="left:47.40px;top:527px;font-size:13.8px;line-height:17px;color:#2a2a2a;transform:scaleX(0.9300);transform-origin:center top;">Дата (число, месяц,</span>
<span style="left:71.15px;top:543px;font-size:13.8px;line-height:17px;color:#2a2a2a;transform:scaleX(0.9300);transform-origin:center top;">год) приема,</span>
<span style="left:78.90px;top:559px;font-size:13.8px;line-height:17px;color:#2a2a2a;transform:scaleX(0.9300);transform-origin:center top;">перевода,</span>
<span style="left:47.19px;top:575px;font-size:13.8px;line-height:17px;color:#2a2a2a;transform:scaleX(0.9300);transform-origin:center top;">увольнения, начала</span>
<span style="left:64.91px;top:591px;font-size:13.8px;line-height:17px;color:#2a2a2a;transform:scaleX(0.9300);transform-origin:center top;">договора ГПХ,</span>
<span style="left:46.72px;top:607px;font-size:13.8px;line-height:17px;color:#2a2a2a;transform:scaleX(0.9300);transform-origin:center top;">окончания договора</span>
<span style="left:99.70px;top:623px;font-size:13.8px;line-height:17px;color:#2a2a2a;transform:scaleX(0.9300);transform-origin:center top;">ГПХ</span>
<span style="left:177.75px;top:535px;font-size:13.8px;line-height:17px;color:#2a2a2a;transform:scaleX(0.9300);transform-origin:center top;">Сведения о приеме,</span>
<span style="left:210.40px;top:551px;font-size:13.8px;line-height:17px;color:#2a2a2a;transform:scaleX(0.9300);transform-origin:center top;">переводе,</span>
<span style="left:178.57px;top:567px;font-size:13.8px;line-height:17px;color:#2a2a2a;transform:scaleX(0.9300);transform-origin:center top;">увольнении, начале</span>
<span style="left:196.41px;top:583px;font-size:13.8px;line-height:17px;color:#2a2a2a;transform:scaleX(0.9300);transform-origin:center top;">договора ГПХ,</span>
<span style="left:178.09px;top:599px;font-size:13.8px;line-height:17px;color:#2a2a2a;transform:scaleX(0.9300);transform-origin:center top;">окончании договора</span>
<span style="left:231.20px;top:615px;font-size:13.8px;line-height:17px;color:#2a2a2a;transform:scaleX(0.9300);transform-origin:center top;">ГПХ</span>
<span style="left:317.47px;top:527px;font-size:13.8px;line-height:17px;color:#2a2a2a;transform:scaleX(0.9300);transform-origin:center top;">Работа в районах</span>
<span style="left:315.14px;top:543px;font-size:13.8px;line-height:17px;color:#2a2a2a;transform:scaleX(0.9300);transform-origin:center top;">Крайнего Севера /</span>
<span style="left:346.39px;top:559px;font-size:13.8px;line-height:17px;color:#2a2a2a;transform:scaleX(0.9300);transform-origin:center top;">работа в</span>
<span style="left:335.65px;top:575px;font-size:13.8px;line-height:17px;color:#2a2a2a;transform:scaleX(0.9300);transform-origin:center top;">местностях,</span>
<span style="left:322.82px;top:591px;font-size:13.8px;line-height:17px;color:#2a2a2a;transform:scaleX(0.9300);transform-origin:center top;">приравненных к</span>
<span style="left:315.14px;top:607px;font-size:13.8px;line-height:17px;color:#2a2a2a;transform:scaleX(0.9300);transform-origin:center top;">районам Крайнего</span>
<span style="left:352.08px;top:623px;font-size:13.8px;line-height:17px;color:#2a2a2a;transform:scaleX(0.9300);transform-origin:center top;">Севера</span>
<span style="left:445.21px;top:543px;font-size:13.8px;line-height:17px;color:#2a2a2a;transform:scaleX(0.9300);transform-origin:center top;">Трудовая функция (должность,</span>
<span style="left:455.41px;top:559px;font-size:13.8px;line-height:17px;color:#2a2a2a;transform:scaleX(0.9300);transform-origin:center top;">профессия, специальность,</span>
<span style="left:444.02px;top:575px;font-size:13.8px;line-height:17px;color:#2a2a2a;transform:scaleX(0.9300);transform-origin:center top;">квалификация, конкретный вид</span>
<span style="left:435.90px;top:591px;font-size:13.8px;line-height:17px;color:#2a2a2a;transform:scaleX(0.9300);transform-origin:center top;">поручаемой работы), структурное</span>
<span style="left:497.45px;top:607px;font-size:13.8px;line-height:17px;color:#2a2a2a;transform:scaleX(0.9300);transform-origin:center top;">подразделение</span>
<span style="left:690.47px;top:559px;font-size:13.8px;line-height:17px;color:#2a2a2a;transform:scaleX(0.9300);transform-origin:center top;">Код</span>
<span style="left:658.31px;top:575px;font-size:13.8px;line-height:17px;color:#2a2a2a;transform:scaleX(0.9300);transform-origin:center top;">выполняемой</span>
<span style="left:676.46px;top:591px;font-size:13.8px;line-height:17px;color:#2a2a2a;transform:scaleX(0.9300);transform-origin:center top;">функции</span>
<span style="left:769.29px;top:551px;font-size:13.8px;line-height:17px;color:#2a2a2a;transform:scaleX(0.9300);transform-origin:center top;">Причины увольнения, пункт,</span>
<span style="left:760.58px;top:567px;font-size:13.8px;line-height:17px;color:#2a2a2a;transform:scaleX(0.9300);transform-origin:center top;">часть статьи, статья Трудового</span>
<span style="left:755.83px;top:583px;font-size:13.8px;line-height:17px;color:#2a2a2a;transform:scaleX(0.9300);transform-origin:center top;">кодекса Российской Федерации,</span>
<span style="left:791.64px;top:599px;font-size:13.8px;line-height:17px;color:#2a2a2a;transform:scaleX(0.9300);transform-origin:center top;">федерального закона</span>
<span style="left:1062.11px;top:532px;font-size:13.8px;line-height:17px;color:#2a2a2a;transform:scaleX(0.9300);transform-origin:center top;">Основание</span>
<span style="left:969.37px;top:580px;font-size:13.8px;line-height:17px;color:#2a2a2a;transform:scaleX(0.9300);transform-origin:center top;">Наименование</span>
<span style="left:985.36px;top:596px;font-size:13.8px;line-height:17px;color:#2a2a2a;transform:scaleX(0.9300);transform-origin:center top;">документа</span>
<span style="left:1095.72px;top:588px;font-size:13.8px;line-height:17px;color:#2a2a2a;transform:scaleX(0.9300);transform-origin:center top;">Дата</span>
<span style="left:1166.47px;top:580px;font-size:13.8px;line-height:17px;color:#2a2a2a;transform:scaleX(0.9300);transform-origin:center top;">Номер</span>
<span style="left:1155.86px;top:596px;font-size:13.8px;line-height:17px;color:#2a2a2a;transform:scaleX(0.9300);transform-origin:center top;">документа</span>
<span style="left:1239.72px;top:559px;font-size:13.8px;line-height:17px;color:#2a2a2a;transform:scaleX(0.9300);transform-origin:center top;">Признак</span>
<span style="left:1242.00px;top:575px;font-size:13.8px;line-height:17px;color:#2a2a2a;transform:scaleX(0.9300);transform-origin:center top;">отмены</span>
<span style="left:1246.10px;top:591px;font-size:13.8px;line-height:17px;color:#2a2a2a;transform:scaleX(0.9300);transform-origin:center top;">записи</span>
<span style="left:30.66px;top:640px;font-size:13.8px;line-height:17px;color:#2a2a2a;transform:scaleX(0.9300);transform-origin:center top;">1</span>
<span style="left:109.16px;top:640px;font-size:13.8px;line-height:17px;color:#2a2a2a;transform:scaleX(0.9300);transform-origin:center top;">2</span>
<span style="left:240.66px;top:640px;font-size:13.8px;line-height:17px;color:#2a2a2a;transform:scaleX(0.9300);transform-origin:center top;">3</span>
<span style="left:372.16px;top:640px;font-size:13.8px;line-height:17px;color:#2a2a2a;transform:scaleX(0.9300);transform-origin:center top;">4</span>
<span style="left:542.66px;top:640px;font-size:13.8px;line-height:17px;color:#2a2a2a;transform:scaleX(0.9300);transform-origin:center top;">5</span>
<span style="left:700.16px;top:640px;font-size:13.8px;line-height:17px;color:#2a2a2a;transform:scaleX(0.9300);transform-origin:center top;">6</span>
<span style="left:857.66px;top:640px;font-size:13.8px;line-height:17px;color:#2a2a2a;transform:scaleX(0.9300);transform-origin:center top;">7</span>
<span style="left:1015.16px;top:640px;font-size:13.8px;line-height:17px;color:#2a2a2a;transform:scaleX(0.9300);transform-origin:center top;">8</span>
<span style="left:1107.16px;top:640px;font-size:13.8px;line-height:17px;color:#2a2a2a;transform:scaleX(0.9300);transform-origin:center top;">9</span>
<span style="left:1181.82px;top:640px;font-size:13.8px;line-height:17px;color:#2a2a2a;transform:scaleX(0.9300);transform-origin:center top;">10</span>
<span style="left:1260.84px;top:640px;font-size:13.8px;line-height:17px;color:#2a2a2a;transform:scaleX(0.9300);transform-origin:center top;">11</span>
<span style="left:30.66px;top:657px;font-size:13.8px;line-height:17px;color:#2a2a2a;transform:scaleX(0.9300);transform-origin:center top;">1</span>
<span style="left:78.47px;top:657px;font-size:13.8px;line-height:17px;color:#2a2a2a;transform:scaleX(0.9300);transform-origin:center top;">18.01.2023</span>
<span style="left:663.02px;top:657px;font-size:13.8px;line-height:17px;color:#2a2a2a;transform:scaleX(0.9300);transform-origin:center top;">9622.2 ДГПХ</span>
<span style="left:992.95px;top:657px;font-size:13.8px;line-height:17px;color:#2a2a2a;transform:scaleX(0.9300);transform-origin:center top;">Договор</span>
<span style="left:1076.47px;top:657px;font-size:13.8px;line-height:17px;color:#2a2a2a;transform:scaleX(0.9300);transform-origin:center top;">18.01.2023</span>
<span style="left:1185.66px;top:657px;font-size:13.8px;line-height:17px;color:#2a2a2a;transform:scaleX(0.9300);transform-origin:center top;">1</span>
<span style="left:214.41px;top:657px;font-size:13.8px;line-height:17px;color:#2a2a2a;transform:scaleX(0.9300);transform-origin:center top;">НАЧАЛО</span>
<span style="left:192.05px;top:673px;font-size:13.8px;line-height:17px;color:#2a2a2a;transform:scaleX(0.9300);transform-origin:center top;">ДОГОВОРА ГПХ</span>
<span style="left:24.80px;top:710px;font-size:15.3px;line-height:19px;color:#2a2a2a;font-weight:700;transform:scaleX(0.9704);transform-origin:left top;">Подраздел 1.2. Сведения о страховом стаже</span>
<span style="left:25.50px;top:753px;font-size:13.8px;line-height:17px;color:#2a2a2a;font-weight:700;transform:scaleX(0.9510);transform-origin:left top;">Отчетный период:</span>
<div style="left:178px;top:749px;width:106px;height:1px;background:#2a2a2a"></div>
<div style="left:178px;top:769px;width:106px;height:1px;background:#2a2a2a"></div>
<div style="left:178px;top:749px;width:1px;height:21px;background:#2a2a2a"></div>
<div style="left:205px;top:749px;width:1px;height:21px;background:#2a2a2a"></div>
<div style="left:231px;top:749px;width:1px;height:21px;background:#2a2a2a"></div>
<div style="left:257px;top:749px;width:1px;height:21px;background:#2a2a2a"></div>
<div style="left:283px;top:749px;width:1px;height:21px;background:#2a2a2a"></div>
<span style="left:291.30px;top:753px;font-size:13.8px;line-height:17px;color:#2a2a2a;transform:scaleX(0.9526);transform-origin:left top;">год</span>
<span style="left:25.50px;top:781px;font-size:13.8px;line-height:17px;color:#2a2a2a;font-weight:700;transform:scaleX(0.9591);transform-origin:left top;">Тип сведений:</span>
<span style="left:156.30px;top:781px;font-size:13.8px;line-height:17px;color:#2a2a2a;transform:scaleX(0.9457);transform-origin:left top;">Исходная</span>
<div style="left:231px;top:777px;width:27px;height:1px;background:#2a2a2a"></div>
<div style="left:231px;top:797px;width:27px;height:1px;background:#2a2a2a"></div>
<div style="left:231px;top:777px;width:1px;height:21px;background:#2a2a2a"></div>
<div style="left:257px;top:777px;width:1px;height:21px;background:#2a2a2a"></div>
<span style="left:287.00px;top:781px;font-size:13.8px;line-height:17px;color:#2a2a2a;transform:scaleX(0.9293);transform-origin:left top;">Назначение пенсии</span>
<div style="left:415px;top:777px;width:27px;height:1px;background:#2a2a2a"></div>
<div style="left:415px;top:797px;width:27px;height:1px;background:#2a2a2a"></div>
<div style="left:415px;top:777px;width:1px;height:21px;background:#2a2a2a"></div>
<div style="left:441px;top:777px;width:1px;height:21px;background:#2a2a2a"></div>
<span style="left:471.00px;top:781px;font-size:13.8px;line-height:17px;color:#2a2a2a;transform:scaleX(0.9409);transform-origin:left top;">Корректирующая</span>
<div style="left:598px;top:777px;width:28px;height:1px;background:#2a2a2a"></div>
<div style="left:598px;top:797px;width:28px;height:1px;background:#2a2a2a"></div>
<div style="left:598px;top:777px;width:1px;height:21px;background:#2a2a2a"></div>
<div style="left:625px;top:777px;width:1px;height:21px;background:#2a2a2a"></div>
<span style="left:655.50px;top:781px;font-size:13.8px;line-height:17px;color:#2a2a2a;transform:scaleX(0.9309);transform-origin:left top;">Отменяющая</span>
<div style="left:756px;top:777px;width:27px;height:1px;background:#2a2a2a"></div>
<div style="left:756px;top:797px;width:27px;height:1px;background:#2a2a2a"></div>
<div style="left:756px;top:777px;width:1px;height:21px;background:#2a2a2a"></div>
<div style="left:782px;top:777px;width:1px;height:21px;background:#2a2a2a"></div>
<span style="left:839.60px;top:781px;font-size:13.8px;line-height:17px;color:#2a2a2a;font-weight:700;transform:scaleX(0.9522);transform-origin:left top;">Корректируемый (отменяемый) период</span>
<div style="left:1150px;top:777px;width:106px;height:1px;background:#2a2a2a"></div>
<div style="left:1150px;top:797px;width:106px;height:1px;background:#2a2a2a"></div>
<div style="left:1150px;top:777px;width:1px;height:21px;background:#2a2a2a"></div>
<div style="left:1176px;top:777px;width:1px;height:21px;background:#2a2a2a"></div>
<div style="left:1202px;top:777px;width:1px;height:21px;background:#2a2a2a"></div>
<div style="left:1228px;top:777px;width:1px;height:21px;background:#2a2a2a"></div>
<div style="left:1255px;top:777px;width:1px;height:21px;background:#2a2a2a"></div>
<span style="left:1263.00px;top:781px;font-size:13.8px;line-height:17px;color:#2a2a2a;transform:scaleX(0.9526);transform-origin:left top;">год</span>
<div style="left:21px;top:817px;width:1287px;height:1px;background:#2a2a2a"></div>
<div style="left:47px;top:850px;width:1261px;height:1px;background:#2a2a2a"></div>
<div style="left:21px;top:883px;width:1287px;height:1px;background:#2a2a2a"></div>
<div style="left:21px;top:903px;width:1287px;height:1px;background:#2a2a2a"></div>
<div style="left:21px;top:817px;width:1px;height:106px;background:#2a2a2a"></div>
<div style="left:47px;top:817px;width:1px;height:106px;background:#2a2a2a"></div>
<div style="left:152px;top:850px;width:1px;height:73px;background:#2a2a2a"></div>
<div style="left:257px;top:817px;width:1px;height:106px;background:#2a2a2a"></div>
<div style="left:362px;top:850px;width:1px;height:73px;background:#2a2a2a"></div>
<div style="left:467px;top:817px;width:1px;height:106px;background:#2a2a2a"></div>
<div style="left:572px;top:850px;width:1px;height:73px;background:#2a2a2a"></div>
<div style="left:703px;top:817px;width:1px;height:106px;background:#2a2a2a"></div>
<div style="left:835px;top:850px;width:1px;height:73px;background:#2a2a2a"></div>
<div style="left:940px;top:850px;width:1px;height:73px;background:#2a2a2a"></div>
<div style="left:1018px;top:817px;width:1px;height:106px;background:#2a2a2a"></div>
<div style="left:1176px;top:850px;width:1px;height:73px;background:#2a2a2a"></div>
<div style="left:1307px;top:817px;width:1px;height:106px;background:#2a2a2a"></div>
<span style="left:25.29px;top:834px;font-size:13.8px;line-height:17px;color:#2a2a2a;transform:scaleX(0.9300);transform-origin:center top;">№</span>
<span style="left:25.11px;top:850px;font-size:13.8px;line-height:17px;color:#2a2a2a;transform:scaleX(0.9300);transform-origin:center top;">п/п</span>
<span style="left:102.96px;top:826px;font-size:13.8px;line-height:17px;color:#2a2a2a;transform:scaleX(0.9300);transform-origin:center top;">Период работы</span>
<span style="left:276.70px;top:826px;font-size:13.8px;line-height:17px;color:#2a2a2a;transform:scaleX(0.9300);transform-origin:center top;">Территориальные условия</span>
<span style="left:465.00px;top:818px;font-size:13.8px;line-height:17px;color:#2a2a2a;transform:scaleX(0.9300);transform-origin:center top;">Особенности исчисления страхового</span>
<span style="left:566.68px;top:834px;font-size:13.8px;line-height:17px;color:#2a2a2a;transform:scaleX(0.9300);transform-origin:center top;">стажа</span>
<span style="left:698.13px;top:826px;font-size:13.8px;line-height:17px;color:#2a2a2a;transform:scaleX(0.9300);transform-origin:center top;">Условия досрочного назначения страховой пенсии</span>
<span style="left:1015.81px;top:826px;font-size:13.8px;line-height:17px;color:#2a2a2a;transform:scaleX(0.9300);transform-origin:center top;">Результат специальной оценки условий труда</span>
<span style="left:63.20px;top:859px;font-size:13.8px;line-height:17px;color:#2a2a2a;transform:scaleX(0.9300);transform-origin:center top;">с дд.мм.гггг</span>
<span style="left:164.07px;top:859px;font-size:13.8px;line-height:17px;color:#2a2a2a;transform:scaleX(0.9300);transform-origin:center top;">по дд.мм.гггг</span>
<span style="left:298.27px;top:859px;font-size:13.8px;line-height:17px;color:#2a2a2a;transform:scaleX(0.9300);transform-origin:center top;">Код</span>
<span style="left:380.86px;top:851px;font-size:13.8px;line-height:17px;color:#2a2a2a;transform:scaleX(0.9300);transform-origin:center top;">Районный</span>
<span style="left:370.73px;top:867px;font-size:13.8px;line-height:17px;color:#2a2a2a;transform:scaleX(0.9300);transform-origin:center top;">коэффициент</span>
<span style="left:482.81px;top:851px;font-size:13.8px;line-height:17px;color:#2a2a2a;transform:scaleX(0.9300);transform-origin:center top;">Основание</span>
<span style="left:504.59px;top:867px;font-size:13.8px;line-height:17px;color:#2a2a2a;transform:scaleX(0.9300);transform-origin:center top;">(код)</span>
<span style="left:581.59px;top:851px;font-size:13.8px;line-height:17px;color:#2a2a2a;transform:scaleX(0.9300);transform-origin:center top;">Дополнительные</span>
<span style="left:608.02px;top:867px;font-size:13.8px;line-height:17px;color:#2a2a2a;transform:scaleX(0.9300);transform-origin:center top;">сведения</span>
<span style="left:714.29px;top:851px;font-size:13.8px;line-height:17px;color:#2a2a2a;transform:scaleX(0.9300);transform-origin:center top;">Особые условия</span>
<span style="left:734.18px;top:867px;font-size:13.8px;line-height:17px;color:#2a2a2a;transform:scaleX(0.9300);transform-origin:center top;">труда (код)</span>
<span style="left:850.81px;top:851px;font-size:13.8px;line-height:17px;color:#2a2a2a;transform:scaleX(0.9300);transform-origin:center top;">Основание</span>
<span style="left:872.59px;top:867px;font-size:13.8px;line-height:17px;color:#2a2a2a;transform:scaleX(0.9300);transform-origin:center top;">(код)</span>
<span style="left:946.83px;top:859px;font-size:13.8px;line-height:17px;color:#2a2a2a;transform:scaleX(0.9300);transform-origin:center top;">Занятость</span>
<span style="left:1018.08px;top:851px;font-size:13.8px;line-height:17px;color:#2a2a2a;transform:scaleX(0.9300);transform-origin:center top;">Индивидуальный номер</span>
<span style="left:1047.69px;top:867px;font-size:13.8px;line-height:17px;color:#2a2a2a;transform:scaleX(0.9300);transform-origin:center top;">рабочего места</span>
<span style="left:1185.61px;top:851px;font-size:13.8px;line-height:17px;color:#2a2a2a;transform:scaleX(0.9300);transform-origin:center top;">Класс (подкласс)</span>
<span style="left:1195.95px;top:867px;font-size:13.8px;line-height:17px;color:#2a2a2a;transform:scaleX(0.9300);transform-origin:center top;">условий труда</span>
<span style="left:30.66px;top:885px;font-size:13.8px;line-height:17px;color:#2a2a2a;transform:scaleX(0.9300);transform-origin:center top;">1</span>
<span style="left:96.16px;top:885px;font-size:13.8px;line-height:17px;color:#2a2a2a;transform:scaleX(0.9300);transform-origin:center top;">2</span>
<span style="left:201.16px;top:885px;font-size:13.8px;line-height:17px;color:#2a2a2a;transform:scaleX(0.9300);transform-origin:center top;">3</span>
<span style="left:306.16px;top:885px;font-size:13.8px;line-height:17px;color:#2a2a2a;transform:scaleX(0.9300);transform-origin:center top;">4</span>
<span style="left:411.16px;top:885px;font-size:13.8px;line-height:17px;color:#2a2a2a;transform:scaleX(0.9300);transform-origin:center top;">5</span>
<span style="left:516.16px;top:885px;font-size:13.8px;line-height:17px;color:#2a2a2a;transform:scaleX(0.9300);transform-origin:center top;">6</span>
<span style="left:634.16px;top:885px;font-size:13.8px;line-height:17px;color:#2a2a2a;transform:scaleX(0.9300);transform-origin:center top;">7</span>
<span style="left:765.66px;top:885px;font-size:13.8px;line-height:17px;color:#2a2a2a;transform:scaleX(0.9300);transform-origin:center top;">8</span>
<span style="left:884.16px;top:885px;font-size:13.8px;line-height:17px;color:#2a2a2a;transform:scaleX(0.9300);transform-origin:center top;">9</span>
<span style="left:971.82px;top:885px;font-size:13.8px;line-height:17px;color:#2a2a2a;transform:scaleX(0.9300);transform-origin:center top;">10</span>
<span style="left:1090.34px;top:885px;font-size:13.8px;line-height:17px;color:#2a2a2a;transform:scaleX(0.9300);transform-origin:center top;">11</span>
<span style="left:1234.32px;top:885px;font-size:13.8px;line-height:17px;color:#2a2a2a;transform:scaleX(0.9300);transform-origin:center top;">12</span>
<div style="left:13px;top:923px;width:1874px;height:1px;background:repeating-linear-gradient(90deg,#2a2a2a 0,#2a2a2a 7px,transparent 7px,transparent 8px)"></div>
<span style="left:25.80px;top:943px;font-size:16px;line-height:19px;color:#2a2a2a;font-weight:700;transform:scaleX(1.0426);transform-origin:left top;">Раздел 1. Сведения о трудовой (иной) деятельности, страховом стаже, заработной плате и дополнительных страховых</span>
<span style="left:25.80px;top:963px;font-size:16px;line-height:19px;color:#2a2a2a;font-weight:700;transform:scaleX(1.0380);transform-origin:left top;">взносах на накопительную пенсию</span>
<span style="left:24.80px;top:1004px;font-size:15.3px;line-height:19px;color:#2a2a2a;font-weight:700;transform:scaleX(0.9643);transform-origin:left top;">Подраздел 1. Сведения о трудовой (иной) деятельности, страховом стаже, заработной плате зарегистрированного лица (ЗЛ)</span>
</div>
<div style="left:0px;top:514px;width:1920px;height:12px;background:rgba(251,212,69,0.51)"></div>
</body></html>
